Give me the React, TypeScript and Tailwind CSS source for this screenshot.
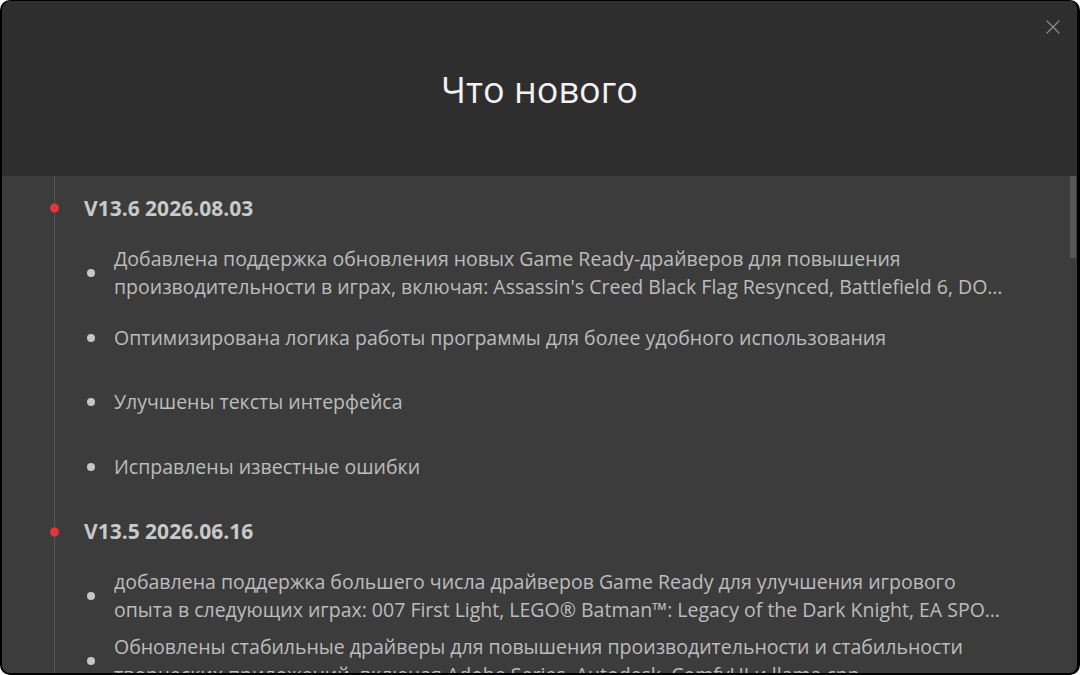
import { X } from 'lucide-react';

type Release = {
  version: string;
  // each note is split into its first line and the remainder, which is cut with an ellipsis
  notes: [string, string?][];
};

const releases: Release[] = [
  {
    version: 'V13.6 2026.08.03',
    notes: [
      [
        'Добавлена поддержка обновления новых Game Ready-драйверов для повышения',
        "производительности в играх, включая: Assassin's Creed Black Flag Resynced, Battlefield 6, DOOM: The Dark Ages, Marvel Rivals",
      ],
      ['Оптимизирована логика работы программы для более удобного использования'],
      ['Улучшены тексты интерфейса'],
      ['Исправлены известные ошибки'],
    ],
  },
  {
    version: 'V13.5 2026.06.16',
    notes: [
      [
        'добавлена поддержка большего числа драйверов Game Ready для улучшения игрового',
        'опыта в следующих играх: 007 First Light, LEGO® Batman™: Legacy of the Dark Knight, EA SPORTS FC 26',
      ],
      [
        'Обновлены стабильные драйверы для повышения производительности и стабильности',
        'творческих приложений, включая Adobe Series, Autodesk, ComfyUI и llama.cpp',
      ],
    ],
  },
];

function ReleaseBlock({ release }: { release: Release }) {
  return (
    <div>
      <div className="relative flex h-[64.67px] items-center pl-[82px]">
        <span className="absolute left-[48px] top-1/2 h-[9px] w-[9px] -translate-y-1/2 rounded-full bg-[#e8333b]" />
        <span className="text-[21px] font-bold text-[#c9c9c9]">{release.version}</span>
      </div>
      {release.notes.map(([first, rest]) => (
        <div key={first} className="flex h-[64.67px] items-center pl-[85px]">
          <span className="mr-[19px] h-[8px] w-[8px] shrink-0 rounded-full bg-[#c6c6c6]" />
          <div className="w-[890px] text-[19.5px] leading-[28px] text-[#bdbdbd]">
            <p className="whitespace-nowrap">{first}</p>
            {rest && <p className="truncate">{rest}</p>}
          </div>
        </div>
      ))}
    </div>
  );
}

export default function App() {
  return (
    <div className="h-[675px] w-[1080px] bg-white" style={{ fontFamily: '"Open Sans", "Noto Sans", sans-serif' }}>
      <div className="flex h-full flex-col overflow-hidden rounded-[10px] border-t border-r-[3px] border-b-2 border-l-2 border-black bg-[#3c3c3c]">
        {/* header */}
        <div className="relative flex h-[175px] shrink-0 items-center justify-center bg-[#2e2e2e] pt-[2px]">
          <h1 className="text-[36px] font-normal text-[#f2f2f2]">Что нового</h1>
          <button className="absolute right-[12px] top-[14px] text-[#8c8c8c]">
            <X size={24} strokeWidth={1.2} />
          </button>
        </div>

        {/* changelog */}
        <div className="relative min-h-0 flex-1 overflow-hidden">
          <div className="absolute bottom-0 left-[52px] top-0 w-px bg-[#555555]" />
          <div className="relative">
            {releases.map((r) => (
              <ReleaseBlock key={r.version} release={r} />
            ))}
          </div>
          <div className="absolute right-[1px] top-0 h-[82px] w-[6px] bg-[#575757]" />
        </div>
      </div>
    </div>
  );
}
